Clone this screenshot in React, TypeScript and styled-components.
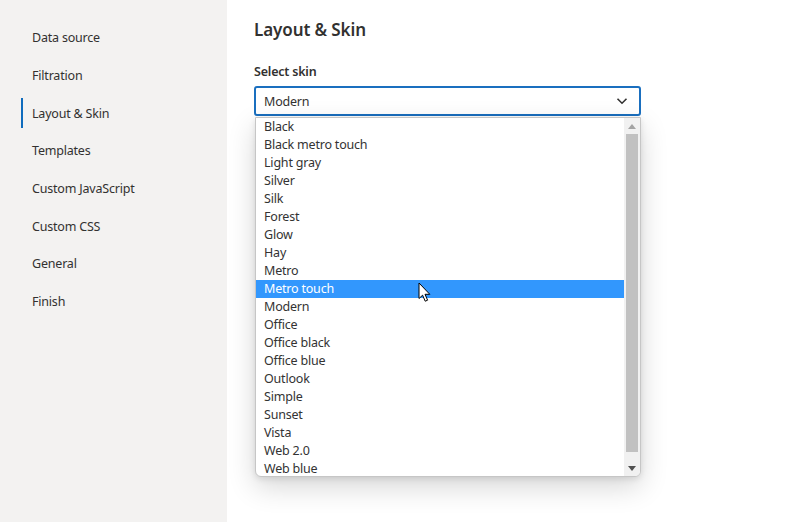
import React from "react";
import styled, { createGlobalStyle } from "styled-components";

const GlobalStyle = createGlobalStyle`
  html, body {
    margin: 0;
    padding: 0;
    background: #ffffff;
  }
  body {
    font-family: "Segoe UI", "Noto Sans", "Open Sans", sans-serif;
    color: #323130;
  }
`;

const navItems = [
  "Data source",
  "Filtration",
  "Layout & Skin",
  "Templates",
  "Custom JavaScript",
  "Custom CSS",
  "General",
  "Finish",
];

const skins = [
  "Black",
  "Black metro touch",
  "Light gray",
  "Silver",
  "Silk",
  "Forest",
  "Glow",
  "Hay",
  "Metro",
  "Metro touch",
  "Modern",
  "Office",
  "Office black",
  "Office blue",
  "Outlook",
  "Simple",
  "Sunset",
  "Vista",
  "Web 2.0",
  "Web blue",
];

const App = () => {
  return (
    <>
      <GlobalStyle />
      <Page>
        <Sidebar>
          {navItems.map((item) => (
            <NavItem key={item} $active={item === "Layout & Skin"}>
              {item}
            </NavItem>
          ))}
        </Sidebar>
        <Main>
          <Title>Layout &amp; Skin</Title>
          <Label>Select skin</Label>
          <SelectWrap>
            <SelectBox>
              <span>Modern</span>
              <svg width="14" height="14" viewBox="0 0 14 14">
                <path d="M2.5 4.8 L7 9.2 L11.5 4.8" fill="none" stroke="#323130" strokeWidth="1.6" />
              </svg>
            </SelectBox>
            <ListBox>
              <Options>
                {skins.map((skin) => (
                  <Option key={skin} $selected={skin === "Metro touch"}>
                    {skin}
                  </Option>
                ))}
              </Options>
              <ScrollBar>
                <ArrowBtn>
                  <svg width="8" height="5" viewBox="0 0 8 5">
                    <path d="M0 5 L4 0 L8 5 Z" fill="#a3a3a3" />
                  </svg>
                </ArrowBtn>
                <Track>
                  <Thumb />
                </Track>
                <ArrowBtn>
                  <svg width="8" height="5" viewBox="0 0 8 5">
                    <path d="M0 0 L8 0 L4 5 Z" fill="#505050" />
                  </svg>
                </ArrowBtn>
              </ScrollBar>
            </ListBox>
            <Cursor width="14" height="22" viewBox="0 0 14 22">
              <path
                d="M1 1 L1 16.5 L4.6 13.2 L7.2 19.2 L9.6 18.2 L7 12.3 L11.8 12.3 Z"
                fill="#ffffff"
                stroke="#000000"
                strokeWidth="1"
                strokeLinejoin="round"
              />
            </Cursor>
          </SelectWrap>
        </Main>
      </Page>
    </>
  );
};

const Page = styled.div`
  display: flex;
  width: 100%;
  height: 100vh;
  overflow: hidden;
`;

const Sidebar = styled.nav`
  width: 227px;
  flex-shrink: 0;
  background: #f3f2f1;
  padding-top: 19px;
  box-sizing: border-box;
  display: flex;
  flex-direction: column;
`;

const NavItem = styled.div<{ $active?: boolean }>`
  position: relative;
  height: 37.7px;
  display: flex;
  align-items: center;
  padding-left: 32px;
  font-size: 12.5px;
  letter-spacing: -0.2px;
  color: #323130;
  &::before {
    content: "";
    display: ${(p) => (p.$active ? "block" : "none")};
    position: absolute;
    left: 21px;
    top: 4px;
    bottom: 4px;
    width: 2px;
    background: #0f6cbd;
  }
`;

const Main = styled.main`
  flex: 1;
  padding: 17px 0 0 27px;
  display: flex;
  flex-direction: column;
`;

const Title = styled.h1`
  margin: 0;
  font-size: 17px;
  letter-spacing: -0.1px;
  font-weight: 600;
  line-height: 26px;
  color: #323130;
`;

const Label = styled.label`
  margin-top: 20px;
  font-size: 12.5px;
  letter-spacing: -0.2px;
  font-weight: 600;
  line-height: 18px;
  color: #323130;
`;

const SelectWrap = styled.div`
  position: relative;
  width: 387px;
  margin-top: 5px;
`;

const SelectBox = styled.div`
  height: 30px;
  box-sizing: border-box;
  border: 2px solid #1a6fbf;
  border-radius: 3px;
  display: flex;
  align-items: center;
  justify-content: space-between;
  padding: 0 10px 0 8px;
  font-size: 12.5px;
  letter-spacing: -0.2px;
  color: #323130;
  background: #fff;
`;

const ListBox = styled.div`
  position: absolute;
  top: 31px;
  left: 1px;
  width: 386px;
  height: 360px;
  box-sizing: border-box;
  border: 1px solid #c6c6c6;
  border-radius: 0 0 6px 6px;
  background: #fff;
  display: flex;
  overflow: hidden;
  box-shadow: 0 10px 28px rgba(0, 0, 0, 0.16), 0 2px 6px rgba(0, 0, 0, 0.1);
`;

const Options = styled.ul`
  list-style: none;
  margin: 0;
  padding: 0;
  flex: 1;
`;

const Option = styled.li<{ $selected?: boolean }>`
  height: 18px;
  line-height: 18px;
  padding-left: 8px;
  font-size: 12.5px;
  letter-spacing: -0.2px;
  color: ${(p) => (p.$selected ? "#ffffff" : "#333333")};
  background: ${(p) => (p.$selected ? "#3297fd" : "transparent")};
`;

const ScrollBar = styled.div`
  width: 16px;
  flex-shrink: 0;
  background: #f1f1f1;
  display: flex;
  flex-direction: column;
`;

const ArrowBtn = styled.div`
  height: 16px;
  display: flex;
  align-items: center;
  justify-content: center;
`;

const Track = styled.div`
  flex: 1;
  padding: 0 2px;
  display: flex;
`;

const Thumb = styled.div`
  flex: 1;
  margin-bottom: 8px;
  background: #c1c1c1;
`;

const Cursor = styled.svg`
  position: absolute;
  left: 164px;
  top: 196px;
`;

export default App;
